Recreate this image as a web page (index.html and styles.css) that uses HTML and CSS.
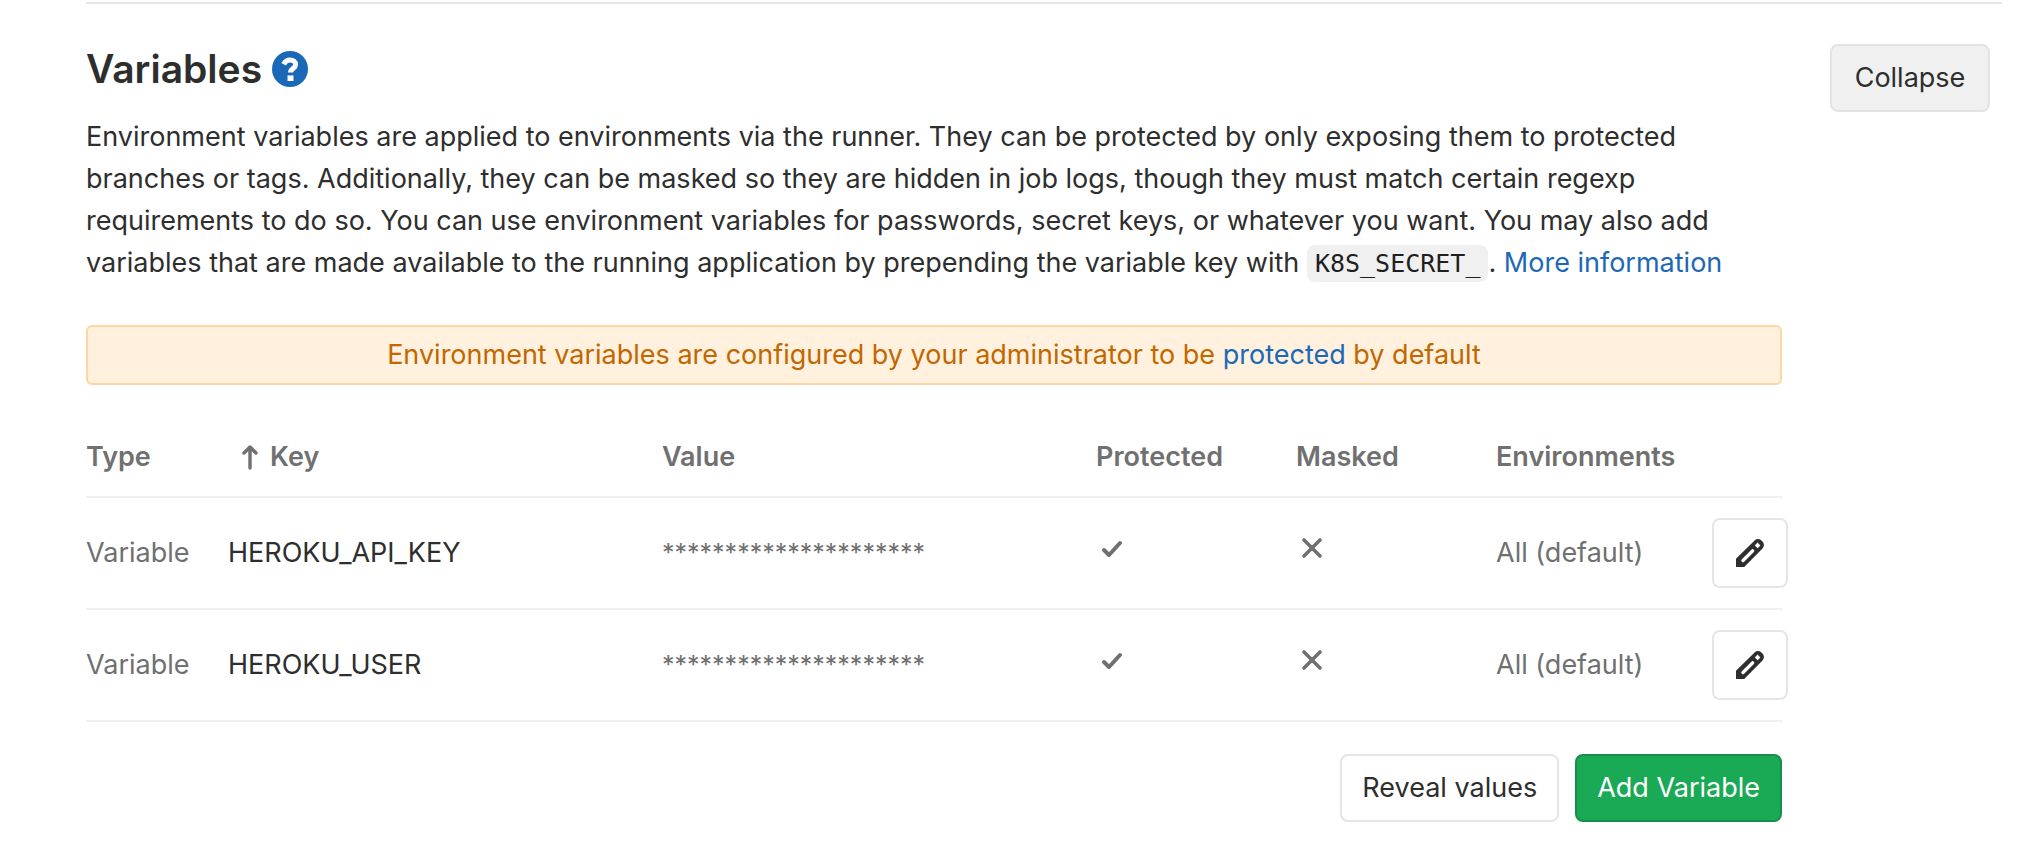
FILE: index.html
```html
<!DOCTYPE html>
<html lang="en">
<head>
  <meta charset="UTF-8" />
  <meta name="viewport" content="width=device-width, initial-scale=1.0" />
  <title>CI/CD Settings - Variables</title>
  <link rel="stylesheet" href="styles.css">
</head>
<body>
  <svg class="sprite" aria-hidden="true">
    <symbol id="check" viewBox="0 0 32 32">
      <path d="M8 18l5 5L24 11" fill="none" stroke="currentColor" stroke-width="4" stroke-linecap="round" stroke-linejoin="round" />
    </symbol>
    <symbol id="close" viewBox="0 0 32 32">
      <path d="M8 8l16 16M24 8L8 24" fill="none" stroke="currentColor" stroke-width="3.6" stroke-linecap="round" />
    </symbol>
    <symbol id="pencil" viewBox="0 0 28 28">
      <path d="M0 28v-8.200L18.600 1.500a4.800 4.800 0 0 1 6.800 0l1.100 1.100a4.800 4.800 0 0 1 0 6.800L8.200 28z" fill="currentColor" />
      <path d="M7 21.500l9.600-9.600" stroke="#fff" stroke-width="3.400" stroke-linecap="round" />
      <path d="M21.600 3.600l2.800 2.800-2.800 2.800-2.800-2.800z" fill="#fff" />
    </symbol>
  </svg>

  <section class="settings">
    <div class="settings-content">
      <h4 class="title">
        Variables
        <a href="#" class="help" aria-label="Help">
          <svg viewBox="0 0 36 36">
            <circle cx="18" cy="18" r="18" fill="#1b69b6" />
            <path d="M11.600 13.200c1.400-2.600 3.500-4.200 6.400-4.200 3.200 0 5.600 1.800 5.600 4.500 0 4-5.100 4-5.100 8" fill="none" stroke="#fff" stroke-width="5" />
            <path d="M15.500 24.400h6v5.600h-6z" fill="#fff" />
          </svg>
        </a>
      </h4>
      <p class="description">
        Environment variables are applied to environments via the runner. They can be protected by only exposing them to protected branches or tags. Additionally, they can be masked so they are hidden in job logs, though they must match certain regexp requirements to do so. You can use environment variables for passwords, secret keys, or whatever you want. You may also add variables that are made available to the running application by prepending the variable key with <code>K8S_SECRET_</code>. <a href="#">More information</a>
      </p>

      <div class="alert">
        Environment variables are configured by your administrator to be <a href="#">protected</a> by default
      </div>

      <table class="variables">
        <colgroup>
          <col class="col-type">
          <col class="col-key">
          <col class="col-value">
          <col class="col-flag">
          <col class="col-flag">
          <col class="col-env">
          <col class="col-actions">
        </colgroup>
        <thead>
          <tr>
            <th>Type</th>
            <th aria-sort="ascending">
              <span class="sort">
                <svg viewBox="0 0 16 26"><path d="M8 24V3M2 9l6-6 6 6" fill="none" stroke="currentColor" stroke-width="3.400" stroke-linecap="round" stroke-linejoin="round" /></svg>
                Key
              </span>
            </th>
            <th>Value</th>
            <th>Protected</th>
            <th>Masked</th>
            <th>Environments</th>
            <th></th>
          </tr>
        </thead>
        <tbody>
          <tr>
            <td>Variable</td>
            <td class="key">HEROKU_API_KEY</td>
            <td class="value">*********************</td>
            <td><svg class="icon" role="img" aria-label="Yes"><use href="#check" /></svg></td>
            <td><svg class="icon" role="img" aria-label="No"><use href="#close" /></svg></td>
            <td>All (default)</td>
            <td><button type="button" class="btn btn-edit" aria-label="Edit"><svg><use href="#pencil" /></svg></button></td>
          </tr>
          <tr>
            <td>Variable</td>
            <td class="key">HEROKU_USER</td>
            <td class="value">*********************</td>
            <td><svg class="icon" role="img" aria-label="Yes"><use href="#check" /></svg></td>
            <td><svg class="icon" role="img" aria-label="No"><use href="#close" /></svg></td>
            <td>All (default)</td>
            <td><button type="button" class="btn btn-edit" aria-label="Edit"><svg><use href="#pencil" /></svg></button></td>
          </tr>
        </tbody>
      </table>

      <div class="actions">
        <button type="button" class="btn">Reveal values</button>
        <button type="button" class="btn btn-success">Add Variable</button>
      </div>
    </div>
    <button type="button" class="btn btn-collapse">Collapse</button>
  </section>
</body>
</html>
```

FILE: styles.css
```css
* {
  box-sizing: border-box;
}
body {
  margin: 0;
  padding: 2px 18px 40px 86px;
  background-color: #fff;
  color: #2e2e2e;
  font-family: Inter, "Liberation Sans", sans-serif;
  font-size: 27px;
  line-height: 42px;
}
a {
  color: #1b69b6;
  text-decoration: none;
}
a:hover {
  text-decoration: underline;
}
.sprite {
  display: none;
}
.settings {
  display: flex;
  align-items: flex-start;
  gap: 48px;
  padding: 40px 12px 0 0;
  border-top: 2px solid #e5e5e5;
}
.settings-content {
  flex: 1;
  min-width: 0;
}
.title {
  display: flex;
  align-items: center;
  gap: 10px;
  margin: 0 0 22px;
  font-size: 39px;
  font-weight: 600;
  line-height: 50px;
}
.help,
.help svg {
  display: block;
  width: 36px;
  height: 36px;
}
.description {
  margin: 0 0 40px;
}
code {
  padding: 4px 8px;
  border-radius: 8px;
  background-color: #f0f0f0;
  color: #1f1f1f;
  font-family: "DejaVu Sans Mono", monospace;
  font-size: 25px;
}

/* alert */
.alert {
  padding: 7px 16px;
  border: 2px solid #fcd8a0;
  border-radius: 6px;
  background-color: #fff1de;
  color: #c26700;
  text-align: center;
}

/* table */
.variables {
  width: 100%;
  margin-top: 32px;
  border-collapse: collapse;
  table-layout: fixed;
  color: #707070;
}
.variables th,
.variables td {
  height: 112px;
  padding: 0;
  border-bottom: 2px solid #f0f0f0;
  text-align: left;
}
.variables th {
  height: 80px;
  font-weight: 600;
}
.col-type { width: 142px; }
.col-key { width: 434px; }
.col-flag { width: 200px; }
.col-env { width: 216px; }
.col-actions { width: 70px; }
.sort {
  display: flex;
  align-items: center;
  gap: 12px;
  padding-left: 14px;
}
.sort svg {
  width: 16px;
  height: 26px;
}
.key {
  color: #2e2e2e;
}
.variables .value {
  font-size: 25px;
}
.icon {
  display: block;
  width: 32px;
  height: 32px;
  margin-bottom: 10px;
}

/* buttons */
.btn {
  height: 68px;
  padding: 0 20px;
  border: 2px solid #e5e5e5;
  border-radius: 8px;
  background-color: #fff;
  color: #2e2e2e;
  font: inherit;
  white-space: nowrap;
  cursor: pointer;
}
.btn-collapse {
  min-width: 160px;
  border-color: #e3e3e3;
  background-color: #f0f0f0;
}
.btn-success {
  border-color: #168f48;
  background-color: #1aaa55;
  color: #fff;
}
.btn-edit {
  display: flex;
  align-items: center;
  justify-content: center;
  width: 76px;
  height: 70px;
}
.btn-edit svg {
  width: 28px;
  height: 28px;
}
.actions {
  display: flex;
  justify-content: flex-end;
  gap: 16px;
  margin-top: 32px;
}
```
